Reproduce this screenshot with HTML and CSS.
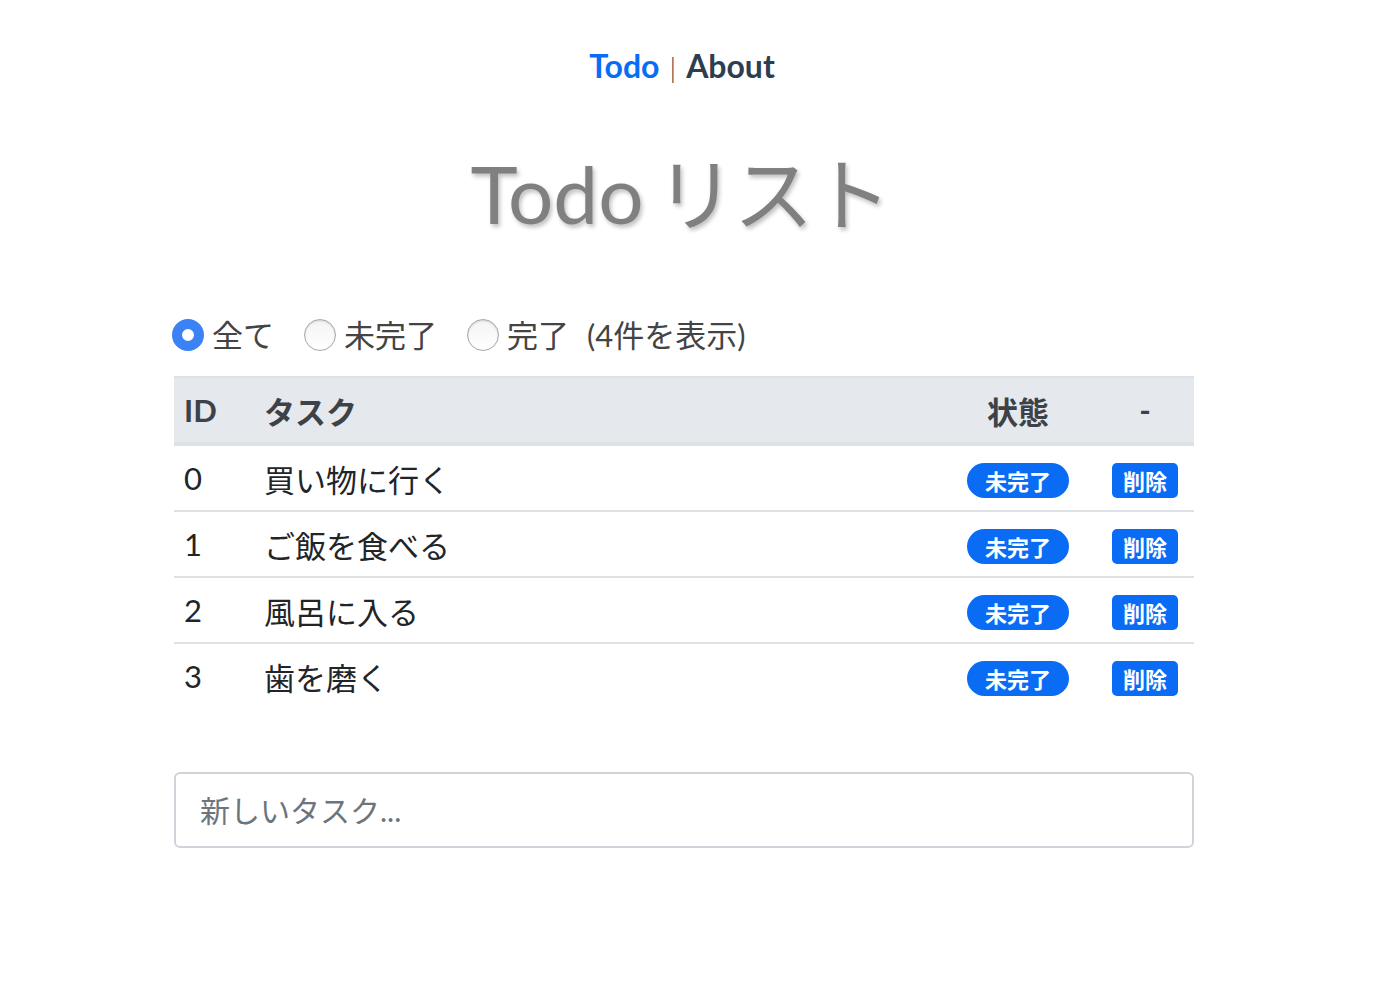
FILE: index.html
```html
<!DOCTYPE html>
<html lang="ja">
<head>
<meta charset="utf-8">
<title>Todo</title>
<link rel="stylesheet" href="styles.css">
</head>
<body>
<div class="app">
  <nav class="nav">
    <a class="nav-link active" href="#">Todo</a>
    <span class="sep">|</span>
    <a class="nav-link" href="#">About</a>
  </nav>
  <h1 class="title">Todo<span class="title-jp">リスト</span></h1>
  <div class="filters">
    <label class="filter"><input type="radio" name="f" class="radio" checked><span>全て</span></label>
    <label class="filter"><input type="radio" name="f" class="radio"><span>未完了</span></label>
    <label class="filter"><input type="radio" name="f" class="radio"><span>完了</span></label>
    <span class="count">(4件を表示)</span>
  </div>
  <table class="table">
    <thead>
      <tr>
        <th class="col-id">ID</th>
        <th class="col-task">タスク</th>
        <th class="col-state">状態</th>
        <th class="col-del">-</th>
      </tr>
    </thead>
    <tbody>
      <tr><td class="col-id">0</td><td class="col-task">買い物に行く</td><td class="col-state"><button class="badge-pill">未完了</button></td><td class="col-del"><button class="btn-del">削除</button></td></tr>
      <tr><td class="col-id">1</td><td class="col-task">ご飯を食べる</td><td class="col-state"><button class="badge-pill">未完了</button></td><td class="col-del"><button class="btn-del">削除</button></td></tr>
      <tr><td class="col-id">2</td><td class="col-task">風呂に入る</td><td class="col-state"><button class="badge-pill">未完了</button></td><td class="col-del"><button class="btn-del">削除</button></td></tr>
      <tr><td class="col-id">3</td><td class="col-task">歯を磨く</td><td class="col-state"><button class="badge-pill">未完了</button></td><td class="col-del"><button class="btn-del">削除</button></td></tr>
    </tbody>
  </table>
  <input class="new-task" type="text" placeholder="新しいタスク...">
</div>
</body>
</html>
```

FILE: styles.css
```css
html, body {
  margin: 0;
  padding: 0;
  background: #fff;
}
body {
  font-family: "Lato", "Noto Sans CJK JP", sans-serif;
  color: #2c3e50;
}
.app {
  width: 1020px;
  margin-left: 174px;
  padding-top: 46px;
}
.nav {
  display: flex;
  justify-content: center;
  align-items: baseline;
  gap: 10px;
  font-size: 32px;
  font-weight: 700;
  line-height: 40px;
  margin-left: -4px;
}
.nav-link {
  color: #2c3e50;
  text-decoration: none;
}
.nav-link.active {
  color: #0a6cf5;
}
.sep {
  font-weight: 300;
  font-size: 28px;
  color: #3a3a3a;
}
.title {
  margin: 56px 0 0;
  text-align: center;
  font-size: 80px;
  font-weight: 400;
  line-height: 100px;
  color: #808080;
  text-shadow: 2px 3px 4px rgba(0, 0, 0, 0.25);
  margin-left: -8px;
}
.title-jp {
  margin-left: 12px;
  letter-spacing: -2px;
}
.filters {
  display: flex;
  align-items: center;
  margin-top: 68px;
  margin-left: -2px;
  font-size: 31px;
  color: #444;
  height: 44px;
}
.filter {
  display: flex;
  align-items: center;
  margin-right: 30px;
}
.filter span {
  margin-left: 8px;
}
.radio {
  appearance: none;
  -webkit-appearance: none;
  margin: 4px 0 0;
  width: 32px;
  height: 32px;
  border-radius: 50%;
  border: 1px solid #a8a8a8;
  background: linear-gradient(#f4f4f4, #ffffff);
  box-shadow: inset 0 1px 2px rgba(0,0,0,0.15);
  box-sizing: border-box;
}
.radio:checked {
  border: 10px solid #3b82f6;
  background: #fff;
  box-shadow: none;
}
.count {
  margin-left: -12px;
}
.table {
  width: 100%;
  border-collapse: collapse;
  margin-top: 21px;
  font-size: 31px;
  color: #212529;
}
.table thead tr {
  background: #e5e8ec;
  border-top: 2px solid #dde1e6;
  border-bottom: 4px solid #dde1e6;
}
.table th {
  height: 64px;
  padding: 0 10px;
  font-weight: 700;
  color: #3d4248;
  text-align: left;
}
.table td {
  height: 64px;
  padding: 0 10px;
  border-bottom: 2px solid #dee2e6;
}
.table tbody tr:last-child td {
  border-bottom: none;
}
.col-id {
  width: 60px;
}
.table th.col-state, .table td.col-state,
.table th.col-del, .table td.col-del {
  text-align: center;
}
.table th.col-state { width: 136px; }
.table th.col-del { width: 78px; }
.badge-pill, .btn-del {
  font-family: "Noto Sans CJK JP", sans-serif;
  font-weight: 700;
  font-size: 22px;
  color: #fff;
  background: #0a6cf5;
  border: none;
  height: 35px;
  padding: 0;
  line-height: 35px;
  vertical-align: middle;
}
.badge-pill {
  width: 102px;
  border-radius: 18px;
}
.btn-del {
  width: 66px;
  border-radius: 5px;
}
.new-task {
  display: block;
  box-sizing: border-box;
  width: 100%;
  height: 76px;
  margin-top: 64px;
  padding: 0 24px;
  border: 2px solid #cfd4db;
  border-radius: 6px;
  font-family: "Lato", "Noto Sans CJK JP", sans-serif;
  font-size: 30px;
  color: #212529;
  outline: none;
}
.new-task::placeholder {
  color: #6c757d;
}
```
